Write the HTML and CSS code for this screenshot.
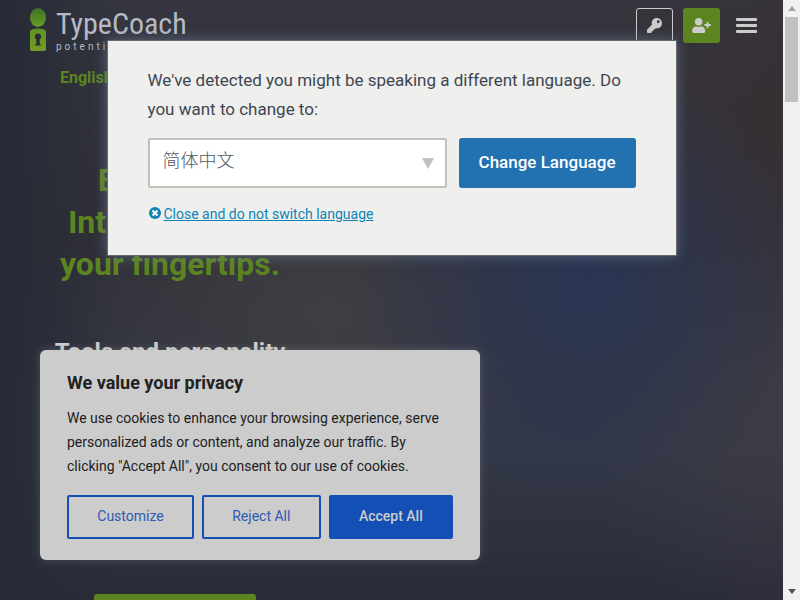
FILE: index.html
```html
<!DOCTYPE html>
<html lang="en">
<head>
    <meta charset="UTF-8">
    <meta name="viewport" content="width=device-width, initial-scale=1.0">
    <title>TypeCoach</title>
    <link rel="stylesheet" href="styles.css">
</head>
<body>
    <div class="page">
        <header class="header">
            <a class="logo" href="#">
                <svg class="logo-mark" viewBox="0 0 16 43" width="16" height="43" aria-hidden="true">
                    <defs>
                        <linearGradient id="head" x1="0" y1="0" x2="0" y2="1">
                            <stop offset="0" stop-color="#3a7428"/>
                            <stop offset="1" stop-color="#699b25"/>
                        </linearGradient>
                        <linearGradient id="lock" x1="0" y1="0" x2="0" y2="1">
                            <stop offset="0" stop-color="#5c9424"/>
                            <stop offset="1" stop-color="#769b25"/>
                        </linearGradient>
                    </defs>
                    <ellipse cx="8" cy="9.5" rx="8" ry="9.5" fill="url(#head)"/>
                    <path d="M0 24q0-2 2-2.500q6-2 12 0q2 .5 2 2.500v17q0 2-2 2h-12q-2 0-2-2z" fill="url(#lock)"/>
                    <path d="M8 25.500a3.300 3.300 0 0 1 1.700 6.100v3.400l1.300 2.500h-6l1.300-2.500v-3.400a3.300 3.300 0 0 1 1.700-6.100z" fill="#2b2d35"/>
                </svg>
                <span class="logo-text">
                    <span class="logo-name">TypeCoach</span>
                    <span class="logo-tag">potential</span>
                </span>
            </a>
            <nav class="actions">
                <a class="action action-login" href="#" aria-label="Log in">
                    <svg viewBox="0 0 512 512" width="15" height="15" aria-hidden="true">
                        <path fill="currentColor" d="M512 176c0 97-79 176-176 176-11 0-22-1-33-3l-24 27a24 24 0 0 1-18 8h-37v40c0 13-11 24-24 24h-40v40c0 13-11 24-24 24H24c-13 0-24-11-24-24v-78c0-6 3-12 7-17l162-162A176 176 0 1 1 512 176zM336 128a48 48 0 1 0 96 0 48 48 0 1 0-96 0z"/>
                    </svg>
                </a>
                <a class="action action-join" href="#" aria-label="Sign up">
                    <svg viewBox="0 0 640 512" width="19" height="15" aria-hidden="true">
                        <path fill="currentColor" d="M624 208h-64v-64c0-9-7-16-16-16h-32c-9 0-16 7-16 16v64h-64c-9 0-16 7-16 16v32c0 9 7 16 16 16h64v64c0 9 7 16 16 16h32c9 0 16-7 16-16v-64h64c9 0 16-7 16-16v-32c0-9-7-16-16-16zM224 256a128 128 0 1 0 0-256 128 128 0 1 0 0 256zm90 32h-17a174 174 0 0 1-146 0h-17C60 288 0 348 0 422v42c0 27 21 48 48 48h352c27 0 48-21 48-48v-42c0-74-60-134-134-134z"/>
                    </svg>
                </a>
                <button class="menu-toggle" type="button" aria-label="Menu">
                    <span></span>
                    <span></span>
                    <span></span>
                </button>
            </nav>
        </header>

        <main class="hero">
            <a class="lang-link" href="#">English</a>
            <h1>Emotional<br>Intelligence at<br>your fingertips.</h1>
            <h2>Tools and personality</h2>
            <a class="hero-cta" href="#" aria-label="Get started"></a>
        </main>

        <section class="cookie" aria-labelledby="cookie-title">
            <h3 id="cookie-title">We value your privacy</h3>
            <p>We use cookies to enhance your browsing experience, serve personalized ads or content, and analyze our traffic. By clicking "Accept All", you consent to our use of cookies.</p>
            <div class="cookie-buttons">
                <button type="button">Customize</button>
                <button type="button">Reject All</button>
                <button class="accept" type="button">Accept All</button>
            </div>
        </section>

        <div class="overlay">
            <form class="modal">
                <label for="language">We've detected you might be speaking a different language. Do you want to change to:</label>
                <div class="modal-row">
                    <div class="select-wrap">
                        <select id="language">
                            <option lang="zh-CN">简体中文</option>
                        </select>
                    </div>
                    <button class="change" type="button">Change Language</button>
                </div>
                <a class="close" href="#">
                    <svg viewBox="0 0 14 14" width="14" height="14" aria-hidden="true">
                        <circle cx="7" cy="6" r="6" fill="#1084b5"/>
                        <path d="M4.500 3.500l5 5m0-5l-5 5" stroke="#fff" stroke-width="2.200"/>
                    </svg>
                    <span>Close and do not switch language</span>
                </a>
            </form>
        </div>
    </div>

    <div class="scrollbar" aria-hidden="true">
        <span class="arrow up"></span>
        <span class="thumb"></span>
        <span class="arrow down"></span>
    </div>
</body>
</html>
```
FILE: styles.css
```css
* {
    box-sizing: border-box;
}
body {
    margin: 0;
    display: flex;
    height: 100vh;
    overflow: hidden;
    font-family: Roboto, "Noto Sans CJK SC", sans-serif;
}
a {
    text-decoration: none;
}
button {
    font-family: inherit;
    cursor: pointer;
}

.page {
    position: relative;
    flex: 1;
    overflow: hidden;
    background:
        radial-gradient(ellipse 30% 36% at 75% 47%, rgba(42, 53, 86, 0.9) 0%, rgba(42, 53, 86, 0) 100%),
        radial-gradient(ellipse 24% 45% at 100% 18%, rgba(56, 46, 49, 0.7) 0%, rgba(56, 46, 49, 0) 100%),
        radial-gradient(ellipse 26% 40% at 100% 66%, rgba(64, 61, 67, 0.8) 0%, rgba(64, 61, 67, 0) 100%),
        radial-gradient(ellipse 34% 34% at 42% 52%, rgba(64, 63, 67, 0.9) 0%, rgba(64, 63, 67, 0) 100%),
        linear-gradient(90deg, #262a36 0%, rgba(38, 42, 54, 0) 16%),
        linear-gradient(180deg, #35363f 0%, #313037 40%, #333847 75%, #2a2b38 100%);
}

/* header */
.header {
    display: flex;
    justify-content: space-between;
    align-items: flex-start;
    padding: 8px 20px 0 30px;
}
.logo {
    display: flex;
    gap: 10px;
    color: #b5bac8;
}
.logo-text {
    display: flex;
    flex-direction: column;
}
.logo-name {
    font-family: "Liberation Sans Narrow", "Roboto Condensed", Roboto, sans-serif;
    font-size: 30px;
    line-height: 32px;
}
.logo-tag {
    font-size: 10px;
    line-height: 14px;
    letter-spacing: 3px;
}
.actions {
    display: flex;
    gap: 10px;
    color: #ccc;
}
.action {
    display: flex;
    align-items: center;
    justify-content: center;
    width: 37px;
    height: 35px;
    border-radius: 3px;
    color: #ccc;
}
.action-login {
    border: 1px solid #ccc;
}
.action-join {
    background: #5c8420;
}
.menu-toggle {
    display: flex;
    flex-direction: column;
    justify-content: center;
    gap: 3px;
    width: 33px;
    height: 35px;
    padding: 0 6px;
    border: 0;
    background: none;
}
.menu-toggle span {
    height: 3px;
    border-radius: 1px;
    background: #ccc;
}

/* hero */
.hero {
    display: flex;
    flex-direction: column;
    align-items: center;
    width: 220px;
    margin-left: 60px;
    padding-top: 14px;
    white-space: nowrap;
}
.lang-link {
    align-self: flex-start;
    color: #5c8420;
    font-size: 16px;
    font-weight: 700;
    line-height: 20px;
}
h1 {
    margin: 71px 0 0;
    color: #5c8420;
    font-size: 32px;
    font-weight: 700;
    line-height: 42px;
    text-align: center;
}
h2 {
    margin: 53px 0 0;
    color: #ccc;
    font-size: 24px;
    font-weight: 700;
    line-height: 28px;
}
.hero-cta {
    width: 162px;
    height: 48px;
    margin: 228px 0 0 10px;
    border-radius: 3px;
    background: #5c8420;
}

/* cookie notice */
.cookie {
    position: absolute;
    left: 40px;
    bottom: 40px;
    width: 440px;
    padding: 21px 27px;
    border-radius: 6px;
    background: #ccc;
    box-shadow: 0 0 10px rgba(172, 171, 171, 0.3);
    color: #212121;
}
.cookie h3 {
    margin: 0;
    font-size: 18px;
    font-weight: 700;
    line-height: 24px;
}
.cookie p {
    margin: 11px 0 17px;
    font-size: 14px;
    line-height: 24px;
}
.cookie-buttons {
    display: flex;
    gap: 8px;
}
.cookie-buttons button {
    flex: 1 1 auto;
    height: 44px;
    padding: 0 27px 2px;
    border: 2px solid #134fb4;
    border-radius: 2px;
    background: none;
    color: #3059b4;
    font-size: 14px;
    white-space: nowrap;
}
.cookie-buttons .accept {
    background: #134fb4;
    color: #ccc;
    font-weight: 500;
}

/* language switch popup */
.overlay {
    position: absolute;
    inset: 0;
    display: flex;
    justify-content: center;
    align-items: flex-start;
    padding-top: 40px;
}
.modal {
    width: 570px;
    padding: 25px 40px 30px;
    border: 1px solid #666c73;
    background: #efefed;
    box-shadow: 0 0 12px rgba(112, 134, 158, 0.6);
    color: #3c434a;
    font-size: 17px;
}
.modal label {
    display: block;
    line-height: 29px;
    color: #3e4651;
}
.modal-row {
    display: flex;
    gap: 12px;
    margin-top: 14px;
}
.select-wrap {
    position: relative;
    flex: 1;
}
.select-wrap::after {
    content: "";
    position: absolute;
    right: 13px;
    top: 20px;
    border: 6px solid transparent;
    border-top: 11px solid #c5bfbb;
    border-bottom: 0;
    pointer-events: none;
}
select {
    appearance: none;
    width: 100%;
    height: 50px;
    padding: 0 30px 5px 13px;
    border: 2px solid #c3bfba;
    border-radius: 2px;
    background: #fff;
    color: #50575e;
    font-family: Roboto, "Noto Sans CJK SC", sans-serif;
    font-size: 18px;
    font-weight: 300;
}
.change {
    height: 50px;
    padding: 0 20px 2px;
    border: 0;
    border-radius: 3px;
    background: #2271b1;
    color: #fff;
    font-size: 17px;
    font-weight: 500;
}
.close {
    display: inline-flex;
    align-items: center;
    gap: 2px;
    margin-top: 15px;
    color: #1084b5;
    font-size: 14px;
    line-height: 22px;
}
.close span {
    text-decoration: underline;
}

/* scrollbar */
.scrollbar {
    display: flex;
    flex-direction: column;
    align-items: center;
    width: 17px;
    padding: 6px 2px;
    background: #f1f1f1;
}
.thumb {
    width: 13px;
    height: 85px;
    margin-top: 6px;
    background: #c1c1c1;
}
.arrow {
    border: 4px solid transparent;
}
.up {
    border-top: 0;
    border-bottom: 5px solid #a3a3a3;
}
.down {
    margin-top: auto;
    border-bottom: 0;
    border-top: 5px solid #505050;
}
```
